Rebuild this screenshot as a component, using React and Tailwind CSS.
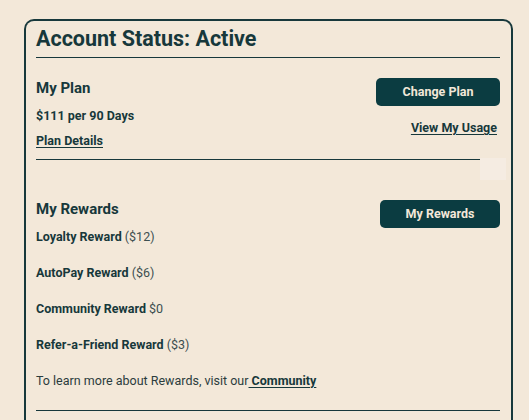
import React from "react";

export default function App() {
  const font = { fontFamily: "Roboto, 'Noto Sans', sans-serif" };
  return (
    <div className="w-[529px] h-[420px] overflow-hidden bg-[#f3e8d9] pl-[24px] pt-[19px] text-[#17383b]" style={font}>
      <div className="relative w-[489px] h-[420px] border-2 border-b-0 border-[#17383b] rounded-t-[10px] pl-[10px] pr-[11px] pt-[4px]">
        <h1 className="text-[21.5px] leading-[28px] font-bold">Account Status: Active</h1>
        <div className="mt-[4px] border-t border-[#17383b]" />

        <div className="flex justify-between pt-[20px] pb-[10px]">
          <div className="flex flex-col">
            <div className="text-[15px] leading-[20px] font-bold">My Plan</div>
            <div className="mt-[10px] text-[12.5px] leading-[16px] font-bold">$111 per 90 Days</div>
            <a className="mt-[9px] text-[12.5px] leading-[16px] font-bold underline underline-offset-2">Plan Details</a>
          </div>
          <div className="flex flex-col items-end">
            <button className="w-[124px] h-[28px] rounded-[5px] bg-[#0b3c41] text-[#f3e8d9] text-[12.5px] font-bold">Change Plan</button>
            <a className="mt-[14px] mr-[3px] text-[12.5px] leading-[16px] font-bold underline underline-offset-2">View My Usage</a>
          </div>
        </div>
        <div className="border-t border-[#17383b]" />

        <div className="flex justify-between pt-[40px]">
          <div className="flex flex-col">
            <div className="text-[15px] leading-[20px] font-bold -mt-[1px]">My Rewards</div>
            <div className="mt-[10px] flex flex-col gap-[20px] text-[12.5px] leading-[16px]">
              <div><span className="font-bold">Loyalty Reward</span> <span className="text-[#3c4f50]">($12)</span></div>
              <div><span className="font-bold">AutoPay Reward</span> <span className="text-[#3c4f50]">($6)</span></div>
              <div><span className="font-bold">Community Reward</span> <span className="text-[#3c4f50]">$0</span></div>
              <div><span className="font-bold">Refer-a-Friend Reward</span> <span className="text-[#3c4f50]">($3)</span></div>
              <div className="text-[12.5px] text-[#2b3c3d]">To learn more about Rewards, visit our<a className="font-bold text-[#17383b] underline underline-offset-2"> Community</a></div>
            </div>
          </div>
          <button className="w-[120px] h-[28px] rounded-[5px] bg-[#0b3c41] text-[#f3e8d9] text-[12.5px] font-bold">My Rewards</button>
        </div>
        <div className="mt-[21px] border-t border-[#17383b]" />

        <div className="absolute left-[454px] top-[137px] w-[26px] h-[22px] bg-[#f5ece2]" />
      </div>
    </div>
  );
}
